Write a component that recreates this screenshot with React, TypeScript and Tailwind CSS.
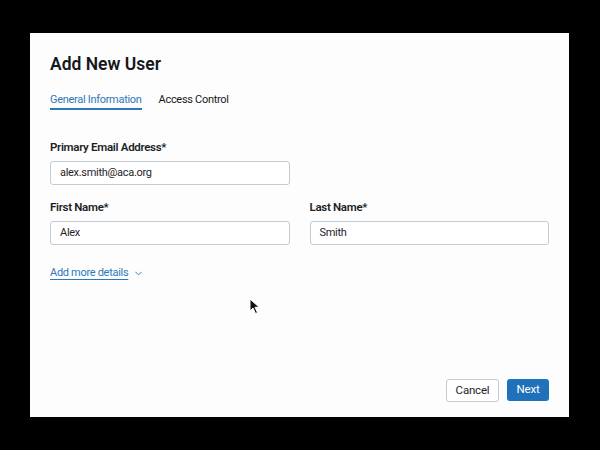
import { ChevronDown } from 'lucide-react';

function Field({ label, value }: { label: string; value: string }) {
  return (
    <div className="flex flex-col">
      <label className="text-[11.5px] leading-[16px] font-semibold tracking-[-0.3px] text-[#1b1f24]">{label}</label>
      <div className="mt-[6px] h-[24px] rounded-[3px] border border-[#c3ccd5] bg-white px-[9px] flex items-center text-[11px] tracking-[-0.3px] text-[#1f2328]">
        {value}
      </div>
    </div>
  );
}

export default function App() {
  return (
    <div className="relative h-[450px] w-[600px] bg-black pt-[33px] pl-[30px] font-['Roboto',sans-serif]">
      <div className="flex h-[384px] w-[539px] flex-col bg-[#fdfdfe] px-[20px] pt-[19px] pb-[15px]">
        <h1 className="text-[17.5px] leading-[24px] font-semibold text-[#15181c]">Add New User</h1>

        <div className="mt-[16px] flex gap-[17px] text-[11px] leading-[16px] tracking-[-0.3px]">
          <div className="border-b-2 border-[#2f78b7] text-[#2f78b7]">General Information</div>
          <div className="text-[#15181c]">Access Control</div>
        </div>

        <div className="mt-[29px] w-[240px]">
          <Field label="Primary Email Address*" value="alex.smith@aca.org" />
        </div>

        <div className="mt-[14px] grid grid-cols-2 gap-[20px]">
          <Field label="First Name*" value="Alex" />
          <Field label="Last Name*" value="Smith" />
        </div>

        <div className="mt-[20px] flex items-center gap-[5px] text-[11px] leading-[16px] tracking-[-0.3px] text-[#2f78b7]">
          <span className="underline underline-offset-[3px] decoration-[#2f78b7]">Add more details</span>
          <ChevronDown className="h-[11px] w-[11px]" strokeWidth={2} />
        </div>

        <div className="mt-auto flex justify-end gap-[8px] text-[11.5px] tracking-[-0.2px]">
          <button className="h-[23px] w-[53px] rounded-[3px] border border-[#c3ccd5] bg-white text-[#1f2328]">Cancel</button>
          <button className="h-[22px] w-[42px] rounded-[3px] bg-[#1f72b9] text-white">Next</button>
        </div>
      </div>

      <svg className="absolute left-[249px] top-[298px]" width="12" height="17" viewBox="0 0 12 17">
        <path d="M1 1 L1 13 L4 10 L6.5 15.5 L8.5 14.6 L6 9.3 L10.2 9.3 Z" fill="#111" stroke="#fff" strokeWidth="1" />
      </svg>
    </div>
  );
}
